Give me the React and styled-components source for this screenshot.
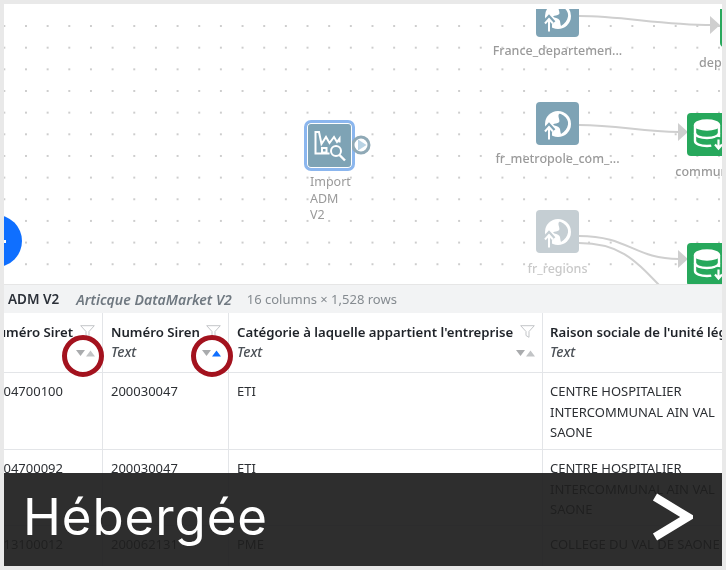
import styled, { createGlobalStyle } from "styled-components";

const GlobalStyle = createGlobalStyle`
  html, body {
    margin: 0;
    padding: 0;
    background: #e9e9e9;
  }
`;

const uiFont = `"Noto Sans", "Open Sans", sans-serif`;

const Frame = styled.div`
  width: 726px;
  height: 570px;
  box-sizing: border-box;
  padding: 4px;
  background: #e9e9e9;
  overflow: hidden;
`;

const Panel = styled.div`
  position: relative;
  width: 718px;
  height: 562px;
  padding-top: 5px;
  box-sizing: border-box;
  background: #fff;
  overflow: hidden;
  display: flex;
  flex-direction: column;
  font-family: ${uiFont};
  filter: blur(0.35px);
`;

const Canvas = styled.div`
  position: relative;
  flex: 0 0 275px;
  overflow: hidden;
  background-image: radial-gradient(circle, #cdcdcd 0.8px, transparent 1.1px);
  background-size: 21.67px 21.67px;
  background-position: -10.5px 6.2px;
`;

const Edges = styled.svg`
  position: absolute;
  left: 0;
  top: 0;
`;

const Node = styled.div`
  position: absolute;
  left: ${(p) => p.$x}px;
  top: ${(p) => p.$y}px;
  width: 43px;
  display: flex;
  flex-direction: column;
  align-items: center;
`;

const Tile = styled.div`
  flex: none;
  width: 43px;
  height: 43px;
  border-radius: 4px;
  background: ${(p) => p.$color};
  display: flex;

  svg {
    width: 43px;
    height: 43px;
  }
`;

const NodeLabel = styled.div`
  margin-top: ${(p) => p.$gap || 5}px;
  font-size: 12.5px;
  font-weight: 500;
  line-height: 17px;
  color: ${(p) => (p.$faded ? "#c9c9c9" : "#9a9a9a")};
  white-space: nowrap;
`;

const ImportNode = styled.div`
  position: absolute;
  left: 300px;
  top: 111px;
  display: flex;
  flex-direction: column;
`;

const ImportRow = styled.div`
  display: flex;
  align-items: center;
`;

const ImportTile = styled.div`
  width: 45px;
  height: 45px;
  border: 3px solid #8bb6ee;
  border-radius: 7px;
  background: #7ea3b5;
  box-shadow: inset 0 0 0 1px #fff;
  display: flex;
`;

const Port = styled.svg`
  margin: -2px 0 0 -3px;
`;

const ImportLabel = styled.div`
  margin: 3px 0 0 6px;
  width: 44px;
  font-size: 12.5px;
  line-height: 16.5px;
  color: #9a9a9a;
`;

const PlusButton = styled.div`
  position: absolute;
  left: -34px;
  top: 206px;
  width: 52px;
  height: 52px;
  border-radius: 50%;
  background: #0f6fff;
  display: flex;
  align-items: center;
  justify-content: center;

  &::after {
    content: "";
    width: 20px;
    height: 3px;
    background: #fff;
  }
`;

const TitleBar = styled.div`
  flex: 0 0 29px;
  box-sizing: border-box;
  display: flex;
  align-items: center;
  padding-left: 4px;
  background: #f2f3f4;
  border-top: 1px solid #e6e6e6;
  white-space: nowrap;
`;

const TitleName = styled.span`
  font-size: 13.5px;
  font-weight: 600;
  color: #2b3038;
`;

const TitleSource = styled.span`
  margin-left: 17px;
  font-size: 14.1px;
  font-weight: 600;
  font-style: italic;
  color: #6f7880;
`;

const TitleInfo = styled.span`
  margin-left: 15px;
  font-size: 13px;
  color: #858b90;
`;

const Table = styled.div`
  flex: 1;
  display: grid;
  grid-template-columns: 99px 126px 314px 1fr;
  grid-template-rows: 60px 77px 76px 77px;
  min-height: 0;
  overflow: hidden;
`;

const Cell = styled.div`
  box-sizing: border-box;
  min-width: 0;
  overflow: hidden;
  padding: 8px 0 0 8px;
  font-size: 13px;
  line-height: 20.5px;
  color: #2c2f33;
  border-right: 1px solid #e3e5e8;
  border-bottom: 1px solid #e3e5e8;
  white-space: pre;

  &:nth-child(4n) {
    border-right: 0;
    padding-left: 7px;
  }
`;

const ClippedCell = styled(Cell)`
  display: flex;
  justify-content: flex-end;
  padding-right: 39px;
`;

const HeadCell = styled(Cell)`
  position: relative;
  padding: 9px 0 0 8px;
`;

const HeadName = styled.div`
  font-size: 13.2px;
  font-weight: 600;
  line-height: 20px;
  color: #1f2329;
  white-space: nowrap;
`;

const ClippedHeadName = styled(HeadName)`
  position: absolute;
  right: 29px;
  top: 9px;
`;

const HeadType = styled.div`
  font-size: 14px;
  font-style: italic;
  font-weight: 500;
  line-height: 20px;
  color: #4d5258;
`;

const HeadIcons = styled.div`
  position: absolute;
  right: 7px;
  top: 12px;
  height: 32px;
  display: flex;
  flex-direction: column;
  align-items: flex-end;
  justify-content: space-between;
`;

const Overlay = styled.div`
  position: absolute;
  left: 0;
  right: 0;
  bottom: 0;
  height: 93px;
  padding: 0 29px 6px 19px;
  box-sizing: border-box;
  display: flex;
  align-items: center;
  justify-content: space-between;
  background: rgba(30, 30, 30, 0.93);
`;

const OverlayTitle = styled.div`
  font-family: Inter, sans-serif;
  font-size: 51px;
  font-weight: 400;
  line-height: 1;
  letter-spacing: 0.9px;
  color: #fff;
`;

const Ring = styled.div`
  position: absolute;
  left: ${(p) => p.$x}px;
  top: 331px;
  width: 42px;
  height: 42px;
  box-sizing: border-box;
  border: 5px solid #a3121e;
  border-radius: 50%;
`;

function GlobeIcon({ color }) {
  return (
    <svg viewBox="0 0 43 43">
      <circle cx="22" cy="22" r="13" fill="#fff" />
      <path
        d="M23 12c2-.6 3 1 4.500 1.500 3.500 2.500 5 5.500 4.500 9-.6 4-3 7-7 9.500-1-2.500-.5-4.500-1.500-6-1.500-2-5-2-6.500-3.500 1.600-1.500 4.500-.5 6-2.200 1.600-2-1.800-5.800 0-8.300z"
        fill={color}
      />
      <path d="M13 38V25.500" stroke={color} strokeWidth="6" />
      <path d="M8.500 29l4.500-5 4.500 5" fill="none" stroke={color} strokeWidth="5" />
      <path d="M13 37.500V25.500M9 29.500l4-4.500 4 4.500" fill="none" stroke="#fff" strokeWidth="2" />
    </svg>
  );
}

function DatabaseIcon({ color }) {
  return (
    <svg viewBox="0 0 43 43">
      <g fill="none" stroke="#fff" strokeWidth="2.400">
        <ellipse cx="20" cy="12" rx="12" ry="4.500" fill="#fff" />
        <path d="M8 12v16c0 3 5.500 5 12 5s12-2 12-5V12" />
        <path d="M8 20c0 3 5.500 5 12 5s12-2 12-5" />
      </g>
      <circle cx="31.500" cy="31.500" r="7.500" fill={color} />
      <path d="M31.500 26.500v8M28 31.500l3.500 4 3.500-4" fill="none" stroke="#fff" strokeWidth="2.200" />
    </svg>
  );
}

function ImportIcon() {
  return (
    <svg width="45" height="45" viewBox="0 0 45 45">
      <g fill="none" stroke="#fff" strokeWidth="2">
        <path d="M8.500 8v22.500h14" />
        <path d="M8.500 9h3.500l2.500 12 4.500-7 3.500 6 4.500-6 3 5 2.500-3.500v4" />
        <rect x="15" y="25" width="4.500" height="4.500" />
        <circle cx="29" cy="28" r="5" />
        <path d="M32.500 32l5.500 5.500" strokeWidth="2.400" />
      </g>
    </svg>
  );
}

function FilterIcon() {
  return (
    <svg width="15" height="13" viewBox="0 0 15 13">
      <path d="M.7.700h13.600L9 6.500V12.300L6 10.500V6.500z" fill="#fff" stroke="#c3c5c8" strokeWidth="1" />
    </svg>
  );
}

function SortIcon({ up }) {
  return (
    <svg width="19" height="7" viewBox="0 0 19 7">
      <path d="M0 0h9L4.500 6z" fill="#a9abad" />
      <path d="M10 6.500h9L14.500.500z" fill={up ? "#0f6fff" : "#c2c4c6"} />
    </svg>
  );
}

function HeadTools({ up }) {
  return (
    <HeadIcons>
      <FilterIcon />
      <SortIcon up={up} />
    </HeadIcons>
  );
}

const slate = "#7ea3b5";
const fadedSlate = "#c5ced3";
const green = "#27a85c";

const siretRows = [
  ["04700100", "200030047", "ETI", "CENTRE HOSPITALIER\nINTERCOMMUNAL AIN VAL\nSAONE"],
  ["04700092", "200030047", "ETI", "CENTRE HOSPITALIER\nINTERCOMMUNAL AIN VAL\nSAONE"],
  ["13100012", "200062131", "PME", "COLLEGE DU VAL DE SAONE"],
];

function Row({ row }) {
  return (
    <>
      <ClippedCell>{row[0]}</ClippedCell>
      <Cell>{row[1]}</Cell>
      <Cell>{row[2]}</Cell>
      <Cell>{row[3]}</Cell>
    </>
  );
}

export default function App() {
  return (
    <Frame>
      <GlobalStyle />
      <Panel>
        <Canvas>
          <Edges width="718" height="275" viewBox="0 0 718 275">
            <g fill="none" stroke="#cfcfcf" strokeWidth="2">
              <path d="M575 7c45 0 80 9 134 9" />
              <path d="M575 116c40 0 62 7 100 7" />
              <path d="M575 227c50 0 55 23 100 23" />
              <path d="M575 234c40 0 55 16 80 42" />
            </g>
            <g fill="#cfcfcf">
              <path d="M706 7l10 9-10 9z" />
              <path d="M674 114l10 9-10 9z" />
              <path d="M674 241l10 9-10 9z" />
            </g>
          </Edges>

          <PlusButton />

          <ImportNode>
            <ImportRow>
              <ImportTile>
                <ImportIcon />
              </ImportTile>
              <Port width="20" height="20" viewBox="0 0 20 20">
                <circle cx="9" cy="10" r="8" fill="#fff" stroke="#8fa9b6" strokeWidth="3" />
                <path d="M6 4.500l8.500 5.500-8.500 5.500z" fill="#b9d3e4" />
              </Port>
            </ImportRow>
            <ImportLabel>Import ADM V2</ImportLabel>
          </ImportNode>

          <Node $x={532} $y={-15}>
            <Tile $color={slate}>
              <GlobeIcon color={slate} />
            </Tile>
            <NodeLabel>France_departemen...</NodeLabel>
          </Node>
          <Node $x={532} $y={93}>
            <Tile $color={slate}>
              <GlobeIcon color={slate} />
            </Tile>
            <NodeLabel>fr_metropole_com_...</NodeLabel>
          </Node>
          <Node $x={532} $y={201}>
            <Tile $color={fadedSlate}>
              <GlobeIcon color={fadedSlate} />
            </Tile>
            <NodeLabel $gap={7} $faded>
              fr_regions
            </NodeLabel>
          </Node>

          <Node $x={716} $y={-5}>
            <Tile $color={green}>
              <DatabaseIcon color={green} />
            </Tile>
            <NodeLabel $gap={7}>departements</NodeLabel>
          </Node>
          <Node $x={683} $y={104}>
            <Tile $color={green}>
              <DatabaseIcon color={green} />
            </Tile>
            <NodeLabel $gap={7}>communes</NodeLabel>
          </Node>
          <Node $x={683} $y={234}>
            <Tile $color={green}>
              <DatabaseIcon color={green} />
            </Tile>
          </Node>
        </Canvas>

        <TitleBar>
          <TitleName>ADM V2</TitleName>
          <TitleSource>Articque DataMarket V2</TitleSource>
          <TitleInfo>16 columns × 1,528 rows</TitleInfo>
        </TitleBar>

        <Table>
          <HeadCell>
            <ClippedHeadName>Numéro Siret</ClippedHeadName>
            <HeadTools />
          </HeadCell>
          <HeadCell>
            <HeadName>Numéro Siren</HeadName>
            <HeadType>Text</HeadType>
            <HeadTools up />
          </HeadCell>
          <HeadCell>
            <HeadName>Catégorie à laquelle appartient l'entreprise</HeadName>
            <HeadType>Text</HeadType>
            <HeadTools />
          </HeadCell>
          <HeadCell>
            <HeadName>Raison sociale de l'unité légale</HeadName>
            <HeadType>Text</HeadType>
          </HeadCell>

          {siretRows.map((row) => (
            <Row key={row[0]} row={row} />
          ))}
        </Table>

        <Ring $x={58} />
        <Ring $x={187} />

        <Overlay>
          <OverlayTitle>Hébergée</OverlayTitle>
          <svg width="42" height="48" viewBox="0 0 42 48">
            <path d="M4 4l33 20L4 44" fill="none" stroke="#fff" strokeWidth="8" />
          </svg>
        </Overlay>
      </Panel>
    </Frame>
  );
}
